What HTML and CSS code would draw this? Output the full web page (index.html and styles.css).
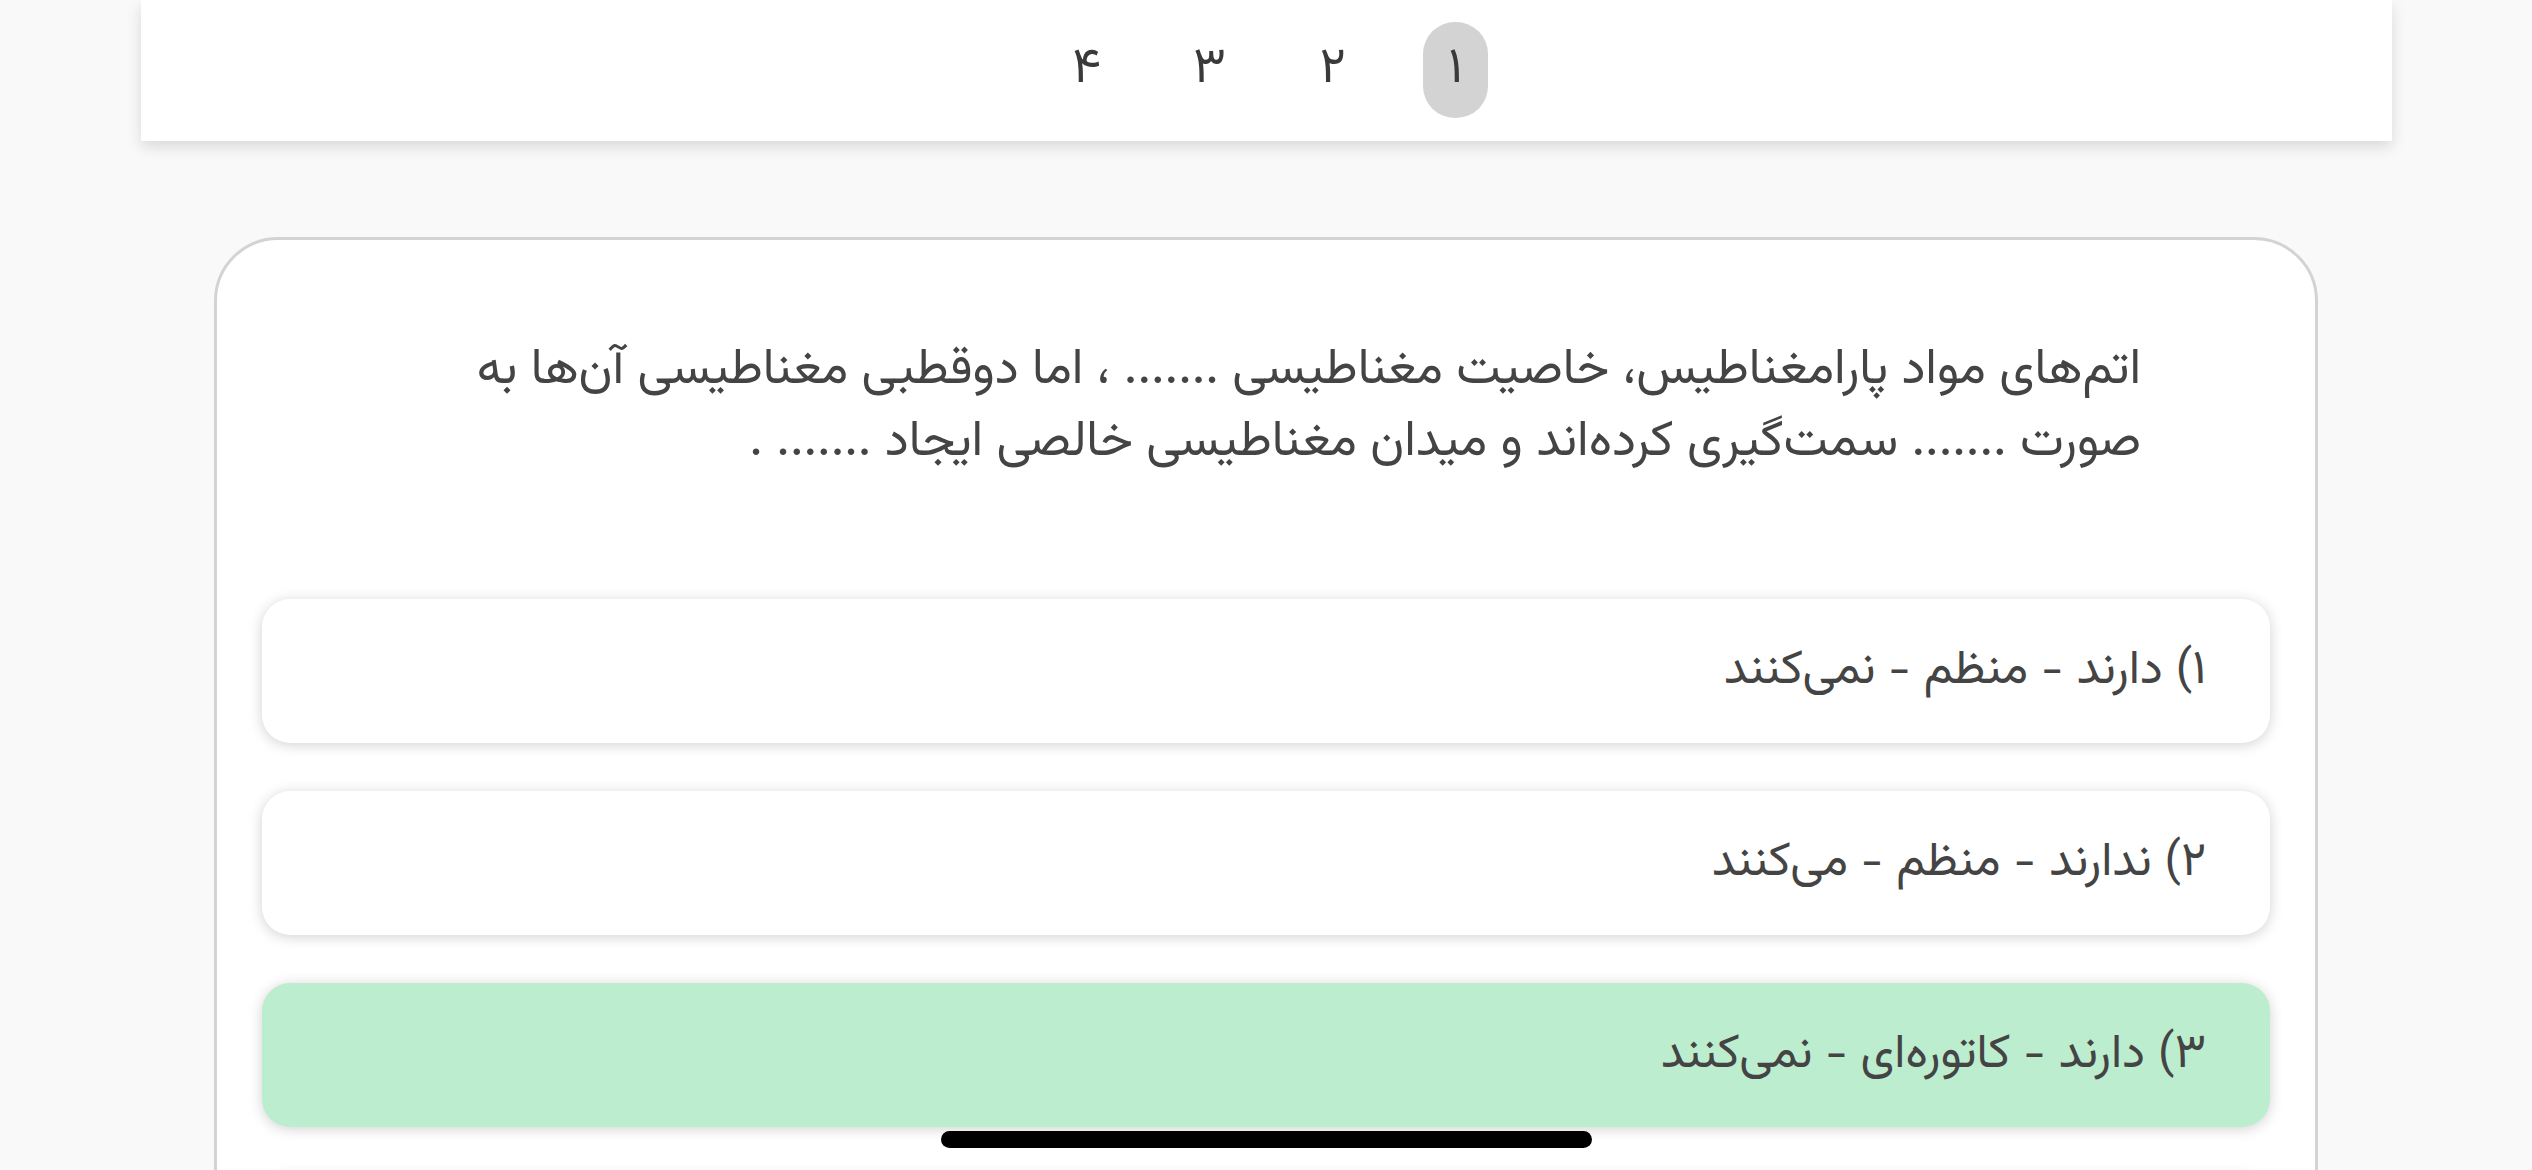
FILE: index.html
```html
<!DOCTYPE html>
<html lang="fa" dir="rtl">
<head>
<meta charset="utf-8">
<title>سوال</title>
<link rel="stylesheet" href="styles.css">
</head>
<body>
<header class="topbar">
  <nav class="pager">
    <span class="page active">۱</span>
    <span class="page">۲</span>
    <span class="page">۳</span>
    <span class="page">۴</span>
  </nav>
</header>
<main class="card">
  <p class="question">اتم‌های مواد پارامغناطیس، خاصیت مغناطیسی ....... ، اما دوقطبی مغناطیسی آن‌ها به صورت ....... سمت‌گیری کرده‌اند و میدان مغناطیسی خالصی ایجاد ....... .</p>
  <div class="options">
    <div class="option">۱) دارند - منظم - نمی‌کنند</div>
    <div class="option">۲) ندارند - منظم - می‌کنند</div>
    <div class="option correct">۳) دارند - کاتوره‌ای - نمی‌کنند</div>
    <div class="option">۴) ندارند - کاتوره‌ای - می‌کنند</div>
  </div>
</main>
<div class="home-indicator"></div>
</body>
</html>
```
FILE: styles.css
```css
html, body {
  margin: 0;
  padding: 0;
}
body {
  background: #f9f9f9;
  font-family: "Vazirmatn", "Noto Sans Arabic", "DejaVu Sans", sans-serif;
  color: #444;
  height: 1170px;
  overflow: hidden;
}
.topbar {
  width: 2251px;
  height: 141px;
  margin: 0 auto;
  background: #fff;
  box-shadow: 0 6px 14px rgba(0, 0, 0, 0.13);
  display: flex;
  justify-content: center;
  align-items: center;
  position: relative;
  z-index: 1;
}
.pager {
  display: flex;
  gap: 58px;
  padding-left: 10px;
  margin-top: -2px;
}
.page {
  width: 65px;
  height: 96px;
  border-radius: 32px;
  display: flex;
  align-items: center;
  justify-content: center;
  font-size: 50px;
  color: #3a3a3a;
}
.page.active {
  background: #d3d3d3;
}
.card {
  margin: 96px auto 0;
  background: #fff;
  border: 3px solid #d3d3d3;
  border-radius: 64px;
  padding: 0 45px 80px;
  box-sizing: border-box;
  width: 2104px;
}
.question {
  margin: 0;
  padding: 95px 129px 0 160px;
  font-size: 50px;
  line-height: 72px;
  color: #444;
}
.options {
  margin-top: 120px;
  display: flex;
  flex-direction: column;
  gap: 48px;
}
.option {
  height: 144px;
  border-radius: 28px;
  background: #fff;
  box-shadow: 0 2px 14px rgba(0, 0, 0, 0.18);
  display: flex;
  align-items: center;
  padding: 0 64px;
  font-size: 48px;
  color: #444;
}
.option.correct {
  background: #bdedcf;
}
.home-indicator {
  position: fixed;
  left: 50%;
  bottom: 22px;
  width: 651px;
  height: 17px;
  margin-left: -325px;
  border-radius: 9px;
  background: #000;
}
```
